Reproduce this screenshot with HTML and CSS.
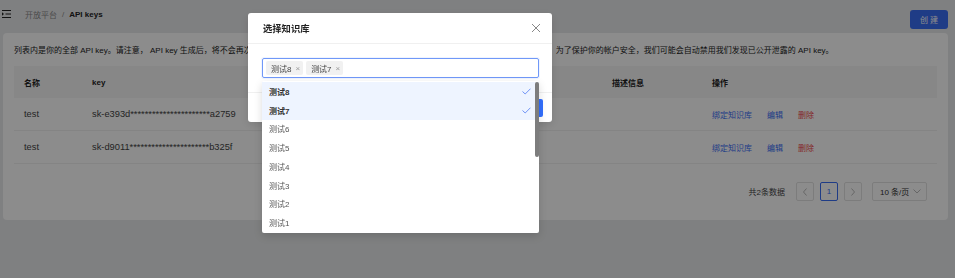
FILE: index.html
```html
<!DOCTYPE html>
<html lang="zh-CN">
<head>
<meta charset="utf-8">
<title>API keys</title>
<link rel="stylesheet" href="styles.css">
</head>
<body>
<div class="page">
  <div class="topbar">
    <div class="crumbs">
      <svg class="fold" width="10" height="8" viewBox="0 0 10 8"><path d="M0 0.5H9M3.5 4H9M0 7.5H9" stroke="#222" stroke-width="1"/><path d="M0 2.3L2 4L0 5.7Z" fill="#222"/></svg>
      <span class="crumb-muted">开放平台</span><span class="sep">/</span><span class="crumb-cur">API keys</span>
    </div>
    <button class="btn-create">创 建</button>
  </div>
  <div class="card">
    <p class="desc">列表内是你的全部 API key。请注意， API key 生成后，将不会再次显示。请不要与他人共享你的 API key，或将其暴露在浏览器或其他客户端的代码中。 为了保护你的帐户安全，我们可能会自动禁用我们发现已公开泄露的 API key。</p>
    <div class="table">
      <div class="tr th"><div class="td">名称</div><div class="td">key</div><div class="td">描述信息</div><div class="td">操作</div></div>
      <div class="tr"><div class="td lat">test</div><div class="td lat">sk-e393d**********************a2759</div><div class="td"></div><div class="td ops"><a class="link">绑定知识库</a><a class="link">编辑</a><a class="link danger">删除</a></div></div>
      <div class="tr"><div class="td lat">test</div><div class="td lat">sk-d9011**********************b325f</div><div class="td"></div><div class="td ops"><a class="link">绑定知识库</a><a class="link">编辑</a><a class="link danger">删除</a></div></div>
    </div>
    <div class="pager">
      <span class="total">共2条数据</span>
      <span class="pg-btn"><svg width="6" height="8" viewBox="0 0 6 8"><path d="M4.5 0.5L1.5 4L4.5 7.5" fill="none" stroke="#bbb" stroke-width="1"/></svg></span>
      <span class="pg-btn active">1</span>
      <span class="pg-btn"><svg width="6" height="8" viewBox="0 0 6 8"><path d="M1.5 0.5L4.5 4L1.5 7.5" fill="none" stroke="#bbb" stroke-width="1"/></svg></span>
      <span class="pg-size">10 条/页<svg width="8" height="5" viewBox="0 0 8 5"><path d="M0.5 0.5L4 4L7.5 0.5" fill="none" stroke="#bbb" stroke-width="1"/></svg></span>
    </div>
  </div>
</div>
<div class="mask"></div>
<div class="modal">
  <div class="modal-head">
    <span class="modal-title">选择知识库</span>
    <svg class="close" width="10" height="10" viewBox="0 0 10 10"><path d="M1 1L9 9M9 1L1 9" stroke="#888" stroke-width="1"/></svg>
  </div>
  <div class="modal-body">
    <div class="select-wrap">
      <div class="select">
        <span class="tag">测试8<span class="tag-x">×</span></span>
        <span class="tag">测试7<span class="tag-x">×</span></span>
      </div>
      <div class="dropdown">
        <div class="opt sel">测试8<svg width="9" height="7" viewBox="0 0 9 7"><path d="M0.5 3.5L3.2 6L8.5 0.7" fill="none" stroke="#6f93f6" stroke-width="1"/></svg></div>
        <div class="opt sel">测试7<svg width="9" height="7" viewBox="0 0 9 7"><path d="M0.5 3.5L3.2 6L8.5 0.7" fill="none" stroke="#6f93f6" stroke-width="1"/></svg></div>
        <div class="opt">测试6</div>
        <div class="opt">测试5</div>
        <div class="opt">测试4</div>
        <div class="opt">测试3</div>
        <div class="opt">测试2</div>
        <div class="opt">测试1</div>
        <div class="thumb"></div>
      </div>
    </div>
  </div>
  <div class="modal-foot">
    <button class="btn-cancel">取 消</button>
    <button class="btn-ok">确 定</button>
  </div>
</div>
</body>
</html>
```

FILE: styles.css
```css
* { box-sizing: border-box; }
html, body { margin: 0; padding: 0; }
body {
  width: 955px;
  height: 278px;
  overflow: hidden;
  background: #e8e9eb;
  font-family: "Liberation Sans", "Noto Sans CJK SC", sans-serif;
  color: #222;
  font-size: 8px;
}
.page { padding: 0 7px 0 3px; }
.topbar {
  height: 33px;
  display: flex;
  justify-content: space-between;
  align-items: flex-start;
}
.crumbs {
  display: flex;
  align-items: center;
  margin-top: 8px;
  height: 12px;
  font-size: 8px;
  margin-left: -1px;
}
.fold { margin-right: 13px; }
.crumb-muted { color: #8a8a8a; }
.sep { color: #8a8a8a; margin: 0 5px; }
.crumb-cur { color: #222; font-weight: 600; }
.btn-create {
  margin-top: 10px;
  width: 38px;
  height: 19px;
  border: none;
  border-radius: 3px;
  background: #3a6df5;
  color: #fff;
  font-family: inherit;
  font-size: 8px;
  padding: 0;
}
.card {
  background: #fff;
  border-radius: 4px;
  padding: 12px 11px 20px;
  height: 187px;
}
.desc {
  margin: 0 0 9px;
  line-height: 12px;
  white-space: nowrap;
  overflow: hidden;
  color: #222;
}
.table { display: flex; flex-direction: column; }
.tr {
  display: grid;
  grid-template-columns: 68px 520px 100px 1fr;
  height: 33px;
  align-items: center;
  border-bottom: 1px solid #f0f0f0;
}
.tr.th {
  height: 32px;
  background: #f6f6f6;
  font-weight: 600;
  color: #222;
  border-bottom: none;
}
.td { padding-left: 10px; color: #444; white-space: nowrap; }
.td.lat { font-size: 9.3px; }
.th .td { color: #222; }
.ops { display: flex; gap: 15px; }
.link { color: #3a6df5; }
.link.danger { color: #f04848; }
.pager {
  display: flex;
  justify-content: flex-end;
  align-items: center;
  margin-top: 18px;
  padding-right: 10px;
  height: 19px;
  font-size: 8px;
}
.total { color: #444; margin-right: 11px; }
.pg-btn {
  width: 18px;
  height: 19px;
  border: 1px solid #e2e2e2;
  border-radius: 2px;
  display: flex;
  align-items: center;
  justify-content: center;
  margin-right: 6px;
  color: #3a6df5;
}
.pg-btn.active { border-color: #3a6df5; }
.pg-size {
  margin-left: 4px;
  width: 55px;
  height: 19px;
  border: 1px solid #e2e2e2;
  border-radius: 2px;
  display: flex;
  align-items: center;
  justify-content: space-between;
  padding: 0 5px 0 7px;
  color: #333;
}
.mask {
  position: fixed;
  inset: 0;
  background: rgba(0, 0, 0, 0.45);
}
.modal {
  position: fixed;
  left: 248px;
  top: 13px;
  width: 304px;
  background: #fff;
  border-radius: 3px;
  box-shadow: 0 3px 10px rgba(0,0,0,0.12);
}
.modal-head {
  height: 31px;
  border-bottom: 1px solid #f0f0f0;
  display: flex;
  align-items: center;
  justify-content: space-between;
  padding: 0 11px 0 15px;
}
.modal-title { font-size: 9.3px; font-weight: 600; color: #222; }
.modal-body { padding: 14px 13px 14px 14px; }
.select-wrap { position: relative; }
.select {
  height: 20px;
  border: 1px solid #7098f8;
  border-radius: 2px;
  display: flex;
  align-items: center;
  padding: 0 3px;
  gap: 3px;
  box-shadow: 0 0 0 1px rgba(51, 112, 255, 0.08);
}
.tag {
  height: 14px;
  background: #f1f1f1;
  border-radius: 2px;
  display: flex;
  align-items: center;
  padding: 0 3px 0 5px;
  font-size: 8px;
  color: #444;
}
.tag-x { font-size: 8px; color: #999; margin-left: 4px; }
.dropdown {
  position: absolute;
  top: calc(100% + 3px);
  left: 0;
  width: 100%;
  background: #fff;
  padding: 1px 0;
  border-radius: 2px;
  box-shadow: 0 3px 8px rgba(0,0,0,0.15);
  z-index: 2;
}
.opt {
  height: 18.75px;
  display: flex;
  align-items: center;
  justify-content: space-between;
  padding: 0 8px 0 7px;
  font-size: 8px;
  color: #555;
}
.opt.sel { background: #eef4ff; color: #333; font-weight: 600; }
.thumb {
  position: absolute;
  right: 0.5px;
  top: 1px;
  width: 4px;
  height: 75px;
  border-radius: 2px;
  background: #7d7d7d;
}
.modal-foot {
  height: 30px;
  border-top: 1px solid #f0f0f0;
  display: flex;
  align-items: center;
  justify-content: flex-end;
  gap: 6px;
  padding: 0 9px;
}
.btn-cancel, .btn-ok {
  height: 18px;
  width: 34px;
  border-radius: 2px;
  font-family: inherit;
  font-size: 8px;
  padding: 0;
}
.btn-cancel { background: #fff; border: 1px solid #ddd; color: #333; }
.btn-ok { background: #3370ff; border: none; color: #fff; }
```
